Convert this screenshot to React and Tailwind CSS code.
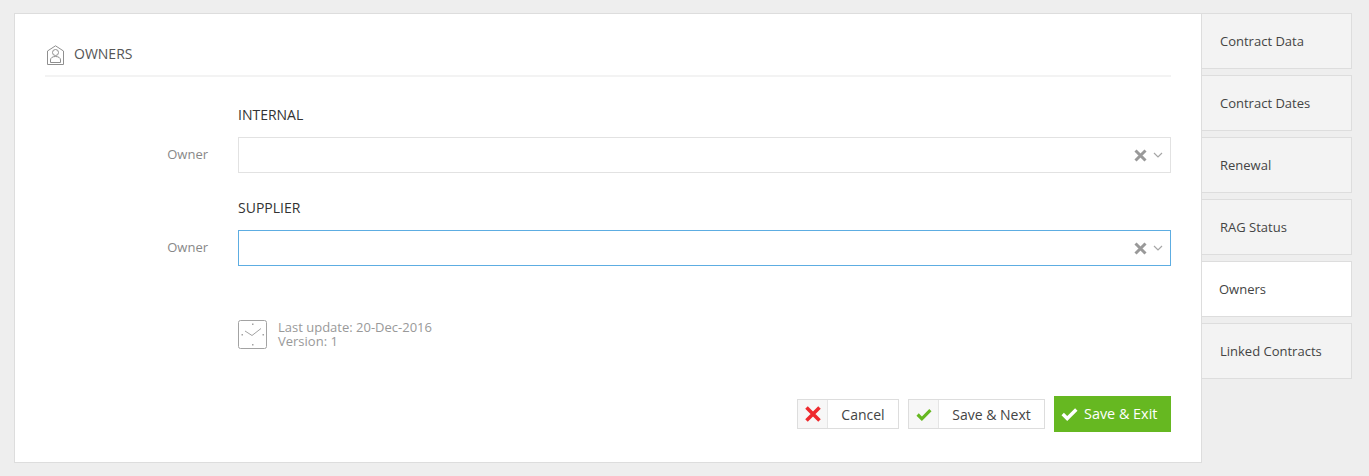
import React from "react";

const tabs = ["Contract Data", "Contract Dates", "Renewal", "RAG Status", "Owners", "Linked Contracts"];

function Clear() {
  return (
    <svg width="13" height="13" viewBox="0 0 13 13" className="block">
      <path d="M1.5 1.5L11.5 11.5M11.5 1.5L1.5 11.5" stroke="#999999" strokeWidth="3" fill="none" />
    </svg>
  );
}

function Chevron() {
  return (
    <svg width="10" height="6" viewBox="0 0 10 6" className="block">
      <path d="M1 1L5 5L9 1" stroke="#a6a6a6" strokeWidth="1.2" fill="none" />
    </svg>
  );
}

function OwnerIcon() {
  return (
    <svg width="17" height="20" viewBox="0 0 17 20" fill="none" stroke="#8f8f8f" strokeWidth="1" className="ml-[2px] block">
      <path d="M0.5 6L8.5 0.8L16.5 6V19.5H0.5Z" />
      <circle cx="8.5" cy="7.5" r="3" />
      <path d="M3.5 17.5V15C3.5 12.8 5.5 11.5 8.5 11.5C11.5 11.5 13.5 12.8 13.5 15V17.5Z" />
    </svg>
  );
}

function ClockIcon() {
  return (
    <svg width="29" height="29" viewBox="0 0 29 29" fill="none" className="block">
      <rect x="0.5" y="0.5" width="28" height="28" rx="2" stroke="#a3a3a3" />
      <path d="M7 11L14 15.5L23 8.5" stroke="#a3a3a3" strokeWidth="1" />
      <rect x="14" y="3.5" width="1.5" height="1.5" fill="#a3a3a3" />
      <rect x="14" y="24" width="1.5" height="1.5" fill="#a3a3a3" />
      <rect x="3.5" y="14" width="1.5" height="1.5" fill="#a3a3a3" />
      <rect x="24.5" y="14" width="1.5" height="1.5" fill="#a3a3a3" />
    </svg>
  );
}

function Check({ color, width = 16 }) {
  return (
    <svg width={width} height={Math.round(width * 0.8)} viewBox="0 0 15 12" className="block">
      <path d="M1.5 6L5.5 10L13.5 2" stroke={color} strokeWidth="3" fill="none" />
    </svg>
  );
}

function Field({ label, title, focused }) {
  return (
    <div>
      <div className="ml-[193px] h-[22px] text-[14px] leading-[22px] text-[#333333]">{title}</div>
      <div className="mt-[11px] flex items-center">
        <div className="w-[163px] text-right text-[13px] text-[#888888]">{label}</div>
        <div
          className={`ml-[30px] flex h-[36px] flex-1 items-center justify-end border bg-white pr-[7px] ${
            focused ? "border-[#5dade2]" : "border-[#e2e2e2]"
          }`}
        >
          <Clear />
          <span className="ml-[6px]">
            <Chevron />
          </span>
        </div>
      </div>
    </div>
  );
}

function OutlineButton({ icon, label, width }) {
  return (
    <div className="flex h-[30px] items-stretch border border-[#dddddd] bg-white" style={{ width }}>
      <div className="flex w-[30px] shrink-0 items-center justify-center border-r border-[#e5e5e5] bg-[#f7f7f7]">
        {icon}
      </div>
      <div className="flex flex-1 items-center justify-center text-[14px] text-[#444444]">{label}</div>
    </div>
  );
}

export default function App() {
  return (
    <div
      className="flex h-[476px] w-full items-start bg-[#eeeeee] pl-[14px] pt-[13px]"
      style={{ fontFamily: '"Open Sans", sans-serif' }}
    >
      <main className="h-[450px] w-[1188px] shrink-0 border border-[#dddddd] bg-white px-[30px]">
        <div className="flex h-[63px] items-start border-b-2 border-[#f3f3f3] pt-[31px]">
          <OwnerIcon />
          <span className="ml-[10px] -mt-px text-[14px] leading-[19px] text-[#555555]">OWNERS</span>
        </div>

        <div className="pt-[27px]">
          <Field title="INTERNAL" label="Owner" />
          <div className="h-[24px]" />
          <Field title="SUPPLIER" label="Owner" focused />
        </div>

        <div className="ml-[193px] mt-[54px] flex h-[29px] items-center">
          <ClockIcon />
          <div className="mb-[2px] ml-[11px] text-[13px] leading-[14px] text-[#999999]">
            <div>Last update: 20-Dec-2016</div>
            <div>Version: 1</div>
          </div>
        </div>

        <div className="mt-[47px] flex items-center justify-end">
          <OutlineButton
            width={102}
            label="Cancel"
            icon={
              <svg width="16" height="16" viewBox="0 0 16 16" className="block">
                <path d="M1.5 1.5L14.5 14.5M14.5 1.5L1.5 14.5" stroke="#ee2a2e" strokeWidth="3.6" fill="none" />
              </svg>
            }
          />
          <div className="ml-[9px]">
            <OutlineButton width={137} label="Save & Next" icon={<Check color="#66b821" />} />
          </div>
          <div className="ml-[9px] flex h-[36px] w-[117px] items-center gap-[6px] bg-[#66b821] pl-[7px] text-[14.4px] text-white">
            <Check color="#ffffff" width={17} />
            <span>Save &amp; Exit</span>
          </div>
        </div>
      </main>

      <nav className="flex w-[150px] shrink-0 flex-col gap-[6px]">
        {tabs.map((t) => {
          const active = t === "Owners";
          return (
            <div
              key={t}
              className={`flex h-[56px] items-center border-y border-r border-[#dddddd] pt-[2px] text-[13px] text-[#444444] ${
                active ? "bg-white pl-[17px]" : "bg-[#f3f3f3] pl-[18px]"
              }`}
            >
              {t}
            </div>
          );
        })}
      </nav>
    </div>
  );
}
